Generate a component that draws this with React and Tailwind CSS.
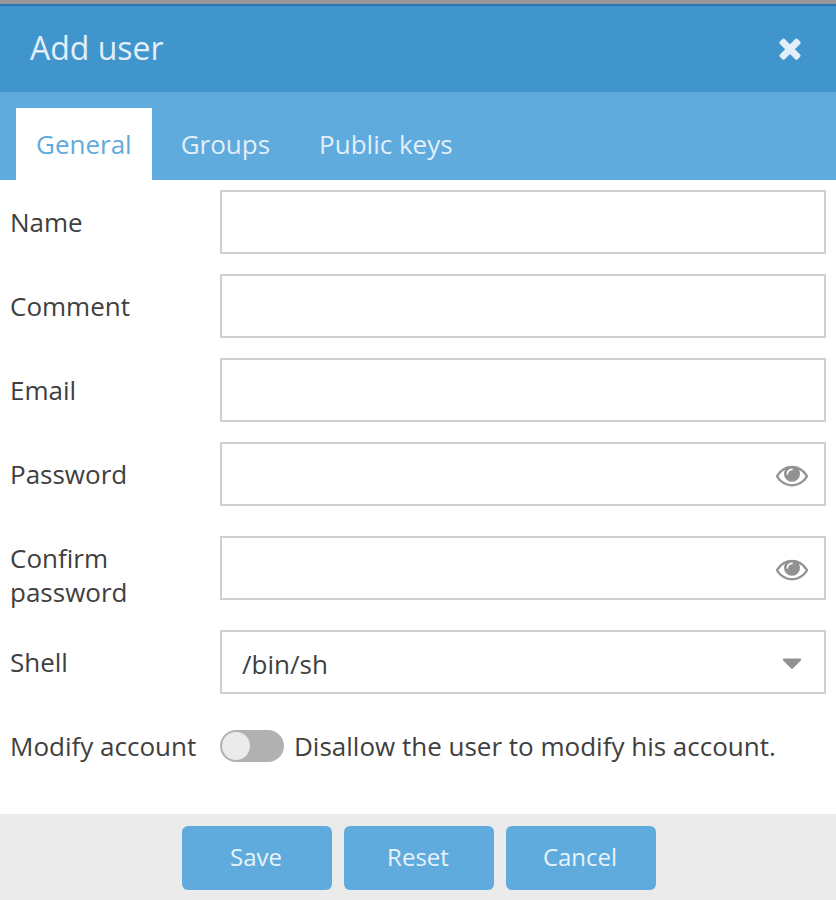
import React, { useState } from 'react';

const tabs = ['General', 'Groups', 'Public keys'];

const fields = [
  { id: 'name', label: 'Name', type: 'text' },
  { id: 'comment', label: 'Comment', type: 'text' },
  { id: 'email', label: 'Email', type: 'email' },
  { id: 'password', label: 'Password', type: 'password' },
  { id: 'confirm', label: 'Confirm password', type: 'password' },
];

const controlClass =
  'block h-16 w-full appearance-none rounded-none border-2 border-[#cfcfcf] bg-white px-5 text-[26px] text-[#404040] outline-none focus:border-[#5fabdd]';

const buttonClass = 'h-16 w-[150px] rounded-md bg-[#5fabdd] pr-0.5 pb-0.5';

const CloseIcon = () => (
  <svg viewBox="0 0 1792 1792" className="size-8" fill="currentColor" aria-hidden="true">
    <path d="M1490 1322q0 40-28 68l-136 136q-28 28-68 28t-68-28l-294-294-294 294q-28 28-68 28t-68-28l-136-136q-28-28-28-68t28-68l294-294-294-294q-28-28-28-68t28-68l136-136q28-28 68-28t68 28l294 294 294-294q28-28 68-28t68 28l136 136q28 28 28 68t-28 68l-294 294 294 294q28 28 28 68z" />
  </svg>
);

const EyeIcon = () => (
  <svg viewBox="0 0 1792 1792" className="size-8" fill="currentColor" aria-hidden="true">
    <path d="M1664 960q-152-236-381-353 61 104 61 225 0 185-131.5 316.5t-316.5 131.5-316.5-131.5-131.5-316.5q0-121 61-225-229 117-381 353 133 205 333.5 326.5t434.5 121.5 434.5-121.5 333.5-326.5zm-720-384q0-20-14-34t-34-14q-125 0-214.5 89.5t-89.5 214.5q0 20 14 34t34 14 34-14 14-34q0-86 61-147t147-61q20 0 34-14t14-34zm848 384q0 34-20 69-140 230-376.5 368.5t-499.5 138.5-499.5-139-376.5-368q-20-35-20-69t20-69q140-229 376.5-368t499.5-139 499.5 139 376.5 368q20 35 20 69z" />
  </svg>
);

const CaretIcon = () => (
  <svg viewBox="0 0 1792 1792" className="size-8" fill="currentColor" aria-hidden="true">
    <path d="M1408 704q0 26-19 45l-448 448q-19 19-45 19t-45-19l-448-448q-19-19-19-45t19-45 45-19h896q26 0 45 19t19 45z" />
  </svg>
);

const Row = ({ id, label, children }) => (
  <div className="flex min-h-[84px] items-center p-2.5">
    <label htmlFor={id} className="w-[210px] shrink-0 self-start pt-[15px] pr-4 pb-px leading-[34px]">
      {label}
    </label>
    <div className="relative min-w-0 flex-1">{children}</div>
  </div>
);

const PasswordInput = ({ id, label }) => {
  const [visible, setVisible] = useState(false);

  return (
    <>
      <input id={id} type={visible ? 'text' : 'password'} className={`${controlClass} pr-16`} />
      <button
        type="button"
        aria-label={`Show ${label.toLowerCase()}`}
        onClick={() => setVisible(!visible)}
        className="absolute inset-y-0 right-0 px-[18px] pt-0.5 text-[#929292]"
      >
        <EyeIcon />
      </button>
    </>
  );
};

const App = () => {
  const [active, setActive] = useState('General');
  const [locked, setLocked] = useState(false);

  return (
    <form
      className="flex min-h-screen flex-col border-t-4 border-[#98989c] bg-white font-['Open_Sans',sans-serif] text-[26px] text-[#404040]"
      onSubmit={(e) => e.preventDefault()}
    >
      <header className="flex h-[88px] items-center justify-between border-t-2 border-[#2c77b4] bg-[#4195cd] px-[30px] pb-0.5 text-[#e2eff8]">
        <h1 className="text-[32px]">Add user</h1>
        <button type="button" aria-label="Close">
          <CloseIcon />
        </button>
      </header>

      <div role="tablist" className="flex gap-[9px] bg-[#5fabdd] px-4 pt-4">
        {tabs.map((tab) => (
          <button
            key={tab}
            type="button"
            role="tab"
            aria-selected={active === tab}
            onClick={() => setActive(tab)}
            className={`h-[72px] px-5 ${active === tab ? 'bg-white text-[#5fabdd]' : 'text-[#e2eff8]'}`}
          >
            {tab}
          </button>
        ))}
      </div>

      <main className="flex-1 pb-6">
        {fields.map(({ id, label, type }) => (
          <Row key={id} id={id} label={label}>
            {type === 'password' ? (
              <PasswordInput id={id} label={label} />
            ) : (
              <input id={id} type={type} className={controlClass} />
            )}
          </Row>
        ))}
        <Row id="shell" label="Shell">
          <select id="shell" defaultValue="/bin/sh" className={`${controlClass} pt-1`}>
            <option>/bin/sh</option>
            <option>/bin/bash</option>
            <option>/bin/dash</option>
            <option>/usr/sbin/nologin</option>
          </select>
          <span className="pointer-events-none absolute inset-y-0 right-[18px] flex items-center pt-0.5 text-[#929292]">
            <CaretIcon />
          </span>
        </Row>
        <Row id="modify" label="Modify account">
          <div className="flex items-center gap-2.5">
            <input
              id="modify"
              type="checkbox"
              checked={locked}
              onChange={(e) => setLocked(e.target.checked)}
              className="h-8 w-16 shrink-0 appearance-none rounded-full bg-[#b1b1b1] p-0.5 before:block before:size-7 before:rounded-full before:bg-[#ebebeb] checked:bg-[#5fabdd] checked:before:ml-auto"
            />
            <label htmlFor="modify" className="leading-[34px]">
              Disallow the user to modify his account.
            </label>
          </div>
        </Row>
      </main>

      <footer className="flex justify-center gap-3 bg-[#ebebeb] pt-3 pr-3 pb-2.5 pl-3.5 text-2xl text-[#e8f3fa]">
        <button type="submit" className={buttonClass}>
          Save
        </button>
        <button type="reset" className={buttonClass}>
          Reset
        </button>
        <button type="button" className={buttonClass}>
          Cancel
        </button>
      </footer>
    </form>
  );
};

export default App;
